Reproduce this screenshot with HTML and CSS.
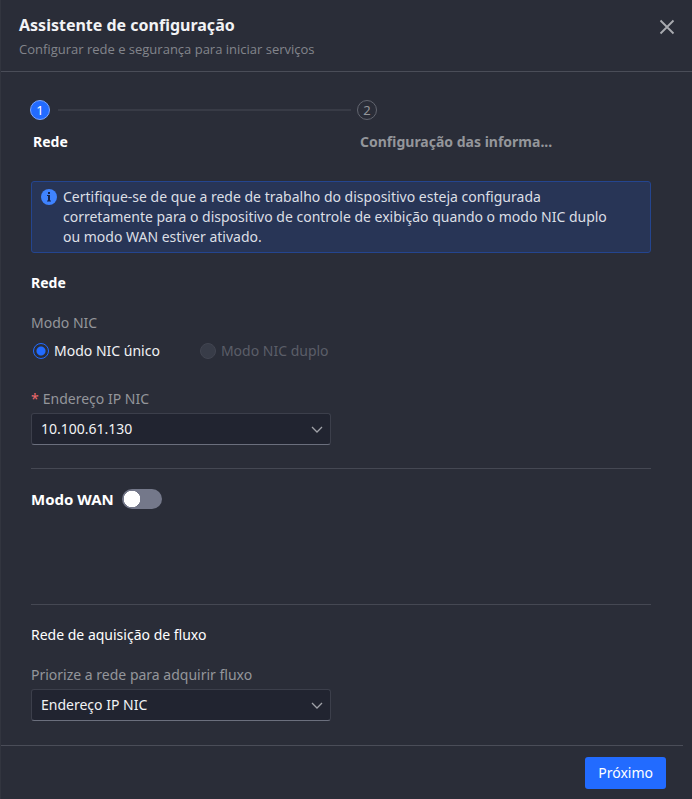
FILE: index.html
```html
<!DOCTYPE html>
<html lang="pt">
<head>
    <meta charset="UTF-8">
    <meta name="viewport" content="width=device-width, initial-scale=1">
    <title>Assistente de configuração</title>
    <link rel="stylesheet" href="styles.css">
</head>
<body>
    <main class="dialog">
        <header class="header">
            <div>
                <h1 class="title">Assistente de configuração</h1>
                <p class="subtitle">Configurar rede e segurança para iniciar serviços</p>
            </div>
            <button class="close" type="button" aria-label="Fechar">
                <svg width="16" height="16" viewBox="0 0 16 16"><path d="M1.5 1.5l13 13M14.5 1.5l-13 13" fill="none" stroke="#a9abb0" stroke-width="1.8"/></svg>
            </button>
        </header>

        <div class="content">
            <!-- Steps -->
            <ol class="steps">
                <li class="step active">
                    <div class="marker"><span class="number">1</span></div>
                    <p class="step-name">Rede</p>
                </li>
                <li class="step">
                    <div class="marker"><span class="number">2</span></div>
                    <p class="step-name">Configuração das informa...</p>
                </li>
            </ol>

            <div class="notice">
                <svg class="notice-icon" width="16" height="16" viewBox="0 0 16 16">
                    <circle cx="8" cy="8" r="8" fill="#3f83ff"/>
                    <path d="M7 3h2v2H7zM6 6h3v6H7V7H6zM6 11.4h4v1H6z" fill="#16234a"/>
                </svg>
                <p>Certifique-se de que a rede de trabalho do dispositivo esteja configurada corretamente para o dispositivo de controle de exibição quando o modo NIC duplo ou modo WAN estiver ativado.</p>
            </div>

            <!-- Network -->
            <section class="network">
                <h2 class="section-title">Rede</h2>
                <fieldset class="modes">
                    <legend class="label">Modo NIC</legend>
                    <div class="radios">
                        <label class="radio"><input type="radio" name="nic" checked>Modo NIC único</label>
                        <label class="radio disabled"><input type="radio" name="nic" disabled>Modo NIC duplo</label>
                    </div>
                </fieldset>
                <label class="label" for="ip"><span class="required">*</span>Endereço IP NIC</label>
                <div class="select">
                    <select id="ip">
                        <option>10.100.61.130</option>
                    </select>
                    <svg class="arrow" width="12" height="8" viewBox="0 0 12 8"><path d="M1 1l5 5 5-5" fill="none" stroke="#a0a2a8" stroke-width="1.3"/></svg>
                </div>
            </section>

            <!-- WAN -->
            <section class="wan">
                <label class="section-title" for="wan">Modo WAN</label>
                <input class="switch" type="checkbox" role="switch" id="wan">
            </section>

            <!-- Stream -->
            <section class="stream">
                <h2 class="section-title plain">Rede de aquisição de fluxo</h2>
                <label class="label" for="priority">Priorize a rede para adquirir fluxo</label>
                <div class="select">
                    <select id="priority">
                        <option>Endereço IP NIC</option>
                    </select>
                    <svg class="arrow" width="12" height="8" viewBox="0 0 12 8"><path d="M1 1l5 5 5-5" fill="none" stroke="#a0a2a8" stroke-width="1.3"/></svg>
                </div>
            </section>
        </div>

        <footer class="footer">
            <button class="next" type="button">Próximo</button>
        </footer>
    </main>
</body>
</html>
```
FILE: styles.css
```css
* {
    box-sizing: border-box;
}
body {
    margin: 0;
    background-color: #2a2d38;
    color: #f2f3f5;
    font-family: "Noto Sans", "Open Sans", sans-serif;
    font-size: 14px;
    line-height: 20px;
}
h1, h2, p, ol, fieldset {
    margin: 0;
    padding: 0;
}
.dialog {
    display: flex;
    flex-direction: column;
    min-height: 100vh;
    border-left: 1px solid #32353f;
}
.header {
    display: flex;
    justify-content: space-between;
    align-items: flex-start;
    padding: 12px 17px 11px 18px;
    border-bottom: 1px solid #4a4d58;
}
.title {
    font-size: 16px;
    line-height: 26px;
}
.subtitle {
    font-family: "Open Sans", sans-serif;
    font-size: 13px;
    line-height: 22px;
    color: #83858c;
}
.close {
    display: flex;
    margin-top: 7px;
    padding: 0;
    border: 0;
    background: none;
    cursor: pointer;
}
.content {
    flex: 1;
    padding: 28px 41px 24px 30px;
}
.steps {
    display: flex;
    margin-left: -1px;
    list-style: none;
}
.step {
    flex: 1;
    min-width: 0;
    color: #94969b;
}
.step:first-child {
    flex: 0 0 327px;
}
.marker {
    display: flex;
    align-items: center;
    gap: 8px;
}
.step:first-child .marker::after {
    content: "";
    flex: 1;
    height: 2px;
    margin-right: 6px;
    background-color: #383b46;
}
.number {
    width: 20px;
    height: 20px;
    border: 1px solid #62656f;
    border-radius: 50%;
    font-size: 13px;
    line-height: 18px;
    text-align: center;
}
.active .number {
    border-color: #7ba6ff;
    background-color: #226bff;
    color: white;
}
.step-name {
    margin-top: 12px;
    padding-left: 3px;
    font-weight: bold;
    white-space: nowrap;
}
.active .step-name {
    color: white;
}
.notice {
    display: flex;
    gap: 6px;
    margin-top: 29px;
    padding: 5px 26px 5px 9px;
    border: 1px solid #24458f;
    border-radius: 3px;
    background-color: #283556;
    color: #dcdfe5;
}
.notice-icon {
    flex: none;
    margin-top: 2px;
}
.network {
    padding: 20px 0 23px;
}
.section-title {
    color: white;
    font-size: 14px;
    font-weight: bold;
}
.plain {
    font-weight: normal;
}
.label {
    display: block;
    padding: 0;
    color: #94969b;
}
.modes {
    margin: 20px 0 28px;
    border: 0;
}
.radios {
    display: flex;
    gap: 38px;
    margin-top: 8px;
}
.radio {
    display: flex;
    align-items: center;
    gap: 5px;
}
.radio input {
    appearance: none;
    width: 16px;
    height: 16px;
    margin: 0 0 0 2px;
    border: 1px solid #226bff;
    border-radius: 50%;
}
.radio input:checked {
    background: radial-gradient(circle, #226bff 4px, transparent 5px);
}
.radio input:disabled {
    border-color: #424551;
    background-color: #383c48;
}
.disabled {
    color: #5b5e68;
}
.required {
    margin-right: 4px;
    color: #f0696b;
}
.select {
    position: relative;
    width: 300px;
    max-width: 100%;
    margin-top: 4px;
}
.select select {
    appearance: none;
    display: block;
    width: 100%;
    height: 32px;
    padding: 0 32px 0 9px;
    border: 1px solid #3c3f4b;
    border-bottom-color: #6b6f7d;
    border-radius: 3px;
    background-color: #212430;
    color: #f2f3f5;
    font: inherit;
}
.arrow {
    position: absolute;
    top: 13px;
    right: 8px;
    pointer-events: none;
}
.wan {
    display: flex;
    gap: 8px;
    height: 136px;
    padding-top: 20px;
    border-top: 1px solid #454853;
}
.wan .section-title {
    font-size: 15px;
}
.switch {
    appearance: none;
    width: 40px;
    height: 20px;
    margin: 0;
    border-radius: 10px;
    background: radial-gradient(circle at 10px 10px, white 8px, transparent 8.5px) #74788a;
}
.stream {
    padding-top: 20px;
    border-top: 1px solid #454853;
}
.stream .label {
    margin-top: 20px;
}
.footer {
    display: flex;
    justify-content: flex-end;
    margin-right: 9px;
    padding: 11px 17px 10px;
    border-top: 1px solid #4a4d58;
}
.next {
    height: 32px;
    padding: 0 13px;
    border: 0;
    border-radius: 3px;
    background-color: #226bff;
    color: white;
    font: inherit;
    cursor: pointer;
}
```
